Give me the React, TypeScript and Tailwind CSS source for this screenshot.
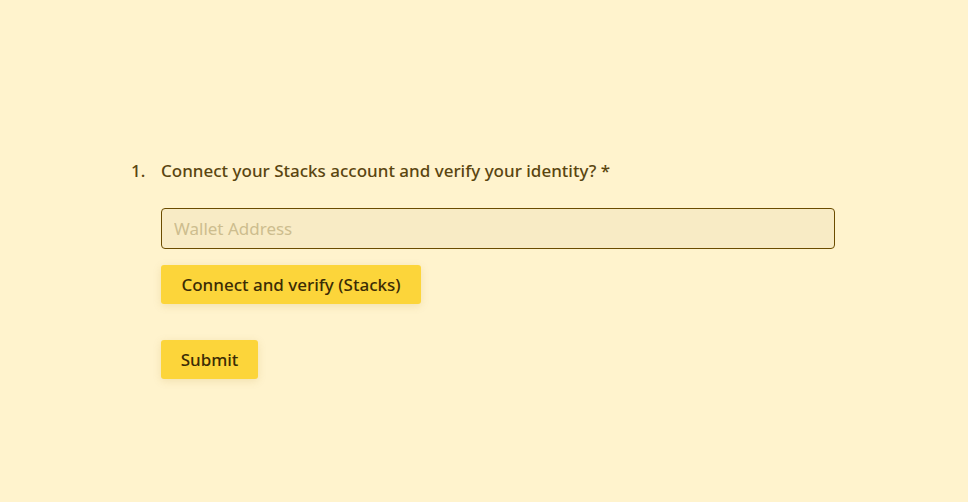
export default function App() {
  return (
    <div className="min-h-screen w-full bg-[#fff3cd] text-[#5a4510]" style={{ fontFamily: '"Noto Sans", "Open Sans", sans-serif' }}>
      <div className="pt-[158px] pl-[131px] flex">
        <div className="w-[30px] text-[17px] font-medium leading-[26px]">1.</div>
        <div className="flex flex-col">
          <div className="text-[17px] font-medium leading-[26px]">Connect your Stacks account and verify your identity? *</div>
          <input
            placeholder="Wallet Address"
            className="mt-[24px] w-[674px] h-[41px] rounded-[4px] border border-[#6b4c00] bg-[#f8ebc5] px-[12px] text-[17px] placeholder:text-[#cdbd8e] outline-none"
          />
          <button className="mt-[16px] w-[260px] h-[39px] rounded-[3px] bg-[#fcd53a] text-[17px] font-medium text-[#3b2c05] shadow-[0_2px_8px_rgba(160,120,0,0.15)]">
            Connect and verify (Stacks)
          </button>
          <button className="mt-[36px] w-[97px] h-[39px] rounded-[3px] bg-[#fcd53a] text-[17px] font-medium text-[#3b2c05] shadow-[0_2px_8px_rgba(160,120,0,0.15)]">
            Submit
          </button>
        </div>
      </div>
    </div>
  );
}
